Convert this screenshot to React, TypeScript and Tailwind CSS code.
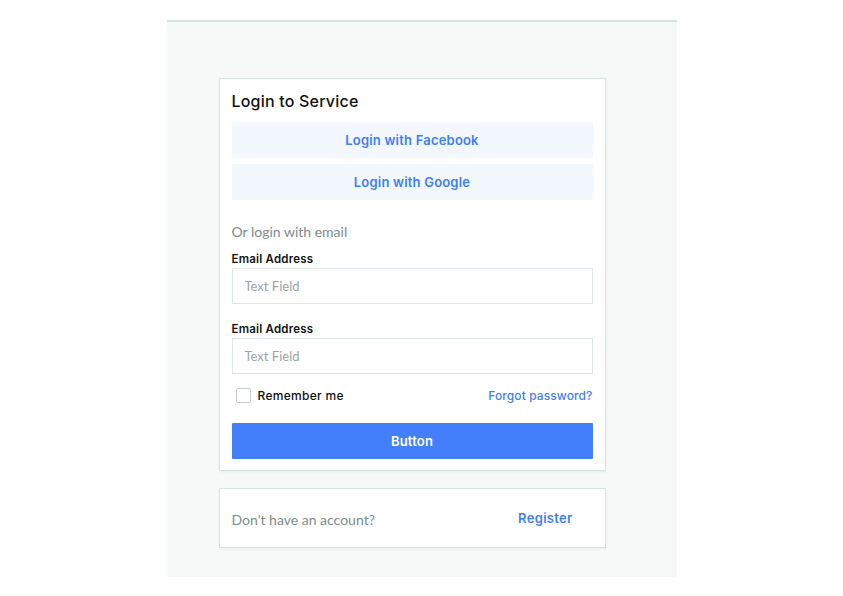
import { useState } from "react";

const head = "font-['Inter','Noto_Sans',sans-serif]";
const thin = "font-['Lato','Open_Sans',sans-serif]";

const EmailField = ({ label }: { label: string }) => (
    <div className="flex flex-col">
        <label className={`${head} text-[11.5px] leading-[12px] font-semibold tracking-[0.2px] text-[#111]`}>{label}</label>
        <input
            type="text"
            placeholder="Text Field"
            className={`${thin} mt-[3px] h-[36px] w-full border border-[#dfe7e5] px-3 text-[13px] text-[#333] placeholder-[#9aa5a3] outline-none`}
        />
    </div>
);

const App = () => {
    const [remember, setRemember] = useState(false);

    return (
        <div className="flex h-[596px] w-[843px] justify-center bg-white">
            <div className="mt-[20px] h-[557px] w-[510px] border-t-2 border-[#d6e4e0] bg-[#f7f9f9] pl-[52px] pt-[56px]">
                <div className="flex w-[387px] flex-col border border-[#d8e2e0] bg-white px-3 pb-[11px] pt-[12px] shadow-[0_1px_2px_rgba(0,0,0,0.06)]">
                    <h1 className={`${head} text-[16px] leading-[20px] font-medium tracking-[0.2px] text-[#111]`}>Login to Service</h1>

                    <button className={`${head} mt-[11px] h-[36px] w-full bg-[#f2f8fd] pt-[2px] text-[13px] font-semibold tracking-[0.2px] text-[#3f7ef0]`}>
                        Login with Facebook
                    </button>
                    <button className={`${head} mt-[6px] h-[36px] w-full bg-[#f2f8fd] pt-[2px] text-[13px] font-semibold tracking-[0.2px] text-[#3f7ef0]`}>
                        Login with Google
                    </button>

                    <p className={`${thin} mt-[24px] text-[14px] leading-[16px] text-[#7d8b89]`}>Or login with email</p>

                    <div className="mt-[13px]">
                        <EmailField label="Email Address" />
                    </div>
                    <div className="mt-[19px]">
                        <EmailField label="Email Address" />
                    </div>

                    <div className="mt-[13px] flex h-[17px] items-center justify-between">
                        <label className="flex items-center">
                            <span
                                onClick={() => setRemember(!remember)}
                                className={`ml-[4px] h-[15px] w-[15px] rounded-[2px] border border-[#c5cdcc] ${remember ? "bg-[#437ffb]" : "bg-white"}`}
                            />
                            <span className={`${head} ml-[7px] pt-[1px] text-[12px] font-medium tracking-[0.3px] text-[#111]`}>Remember me</span>
                        </label>
                        <a href="#" className={`${head} pt-[1px] text-[12px] font-medium tracking-[0.1px] text-[#3f7ef0]`}>
                            Forgot password?
                        </a>
                    </div>

                    <button className={`${head} mt-[19px] h-[36px] w-full rounded-[1px] bg-[#437ffb] pt-[2px] text-[13px] font-semibold tracking-[0.2px] text-white`}>
                        Button
                    </button>
                </div>

                <div className="mt-[17px] flex h-[60px] w-[387px] items-center justify-between border border-[#d8e2e0] bg-white pl-3 pr-[32px] pt-[2px] shadow-[0_1px_2px_rgba(0,0,0,0.06)]">
                    <span className={`${thin} text-[14px] text-[#7d8b89]`}>Don't have an account?</span>
                    <a href="#" className={`${head} text-[13px] font-semibold tracking-[0.3px] text-[#3f7ef0]`}>
                        Register
                    </a>
                </div>
            </div>
        </div>
    );
};

export default App;
